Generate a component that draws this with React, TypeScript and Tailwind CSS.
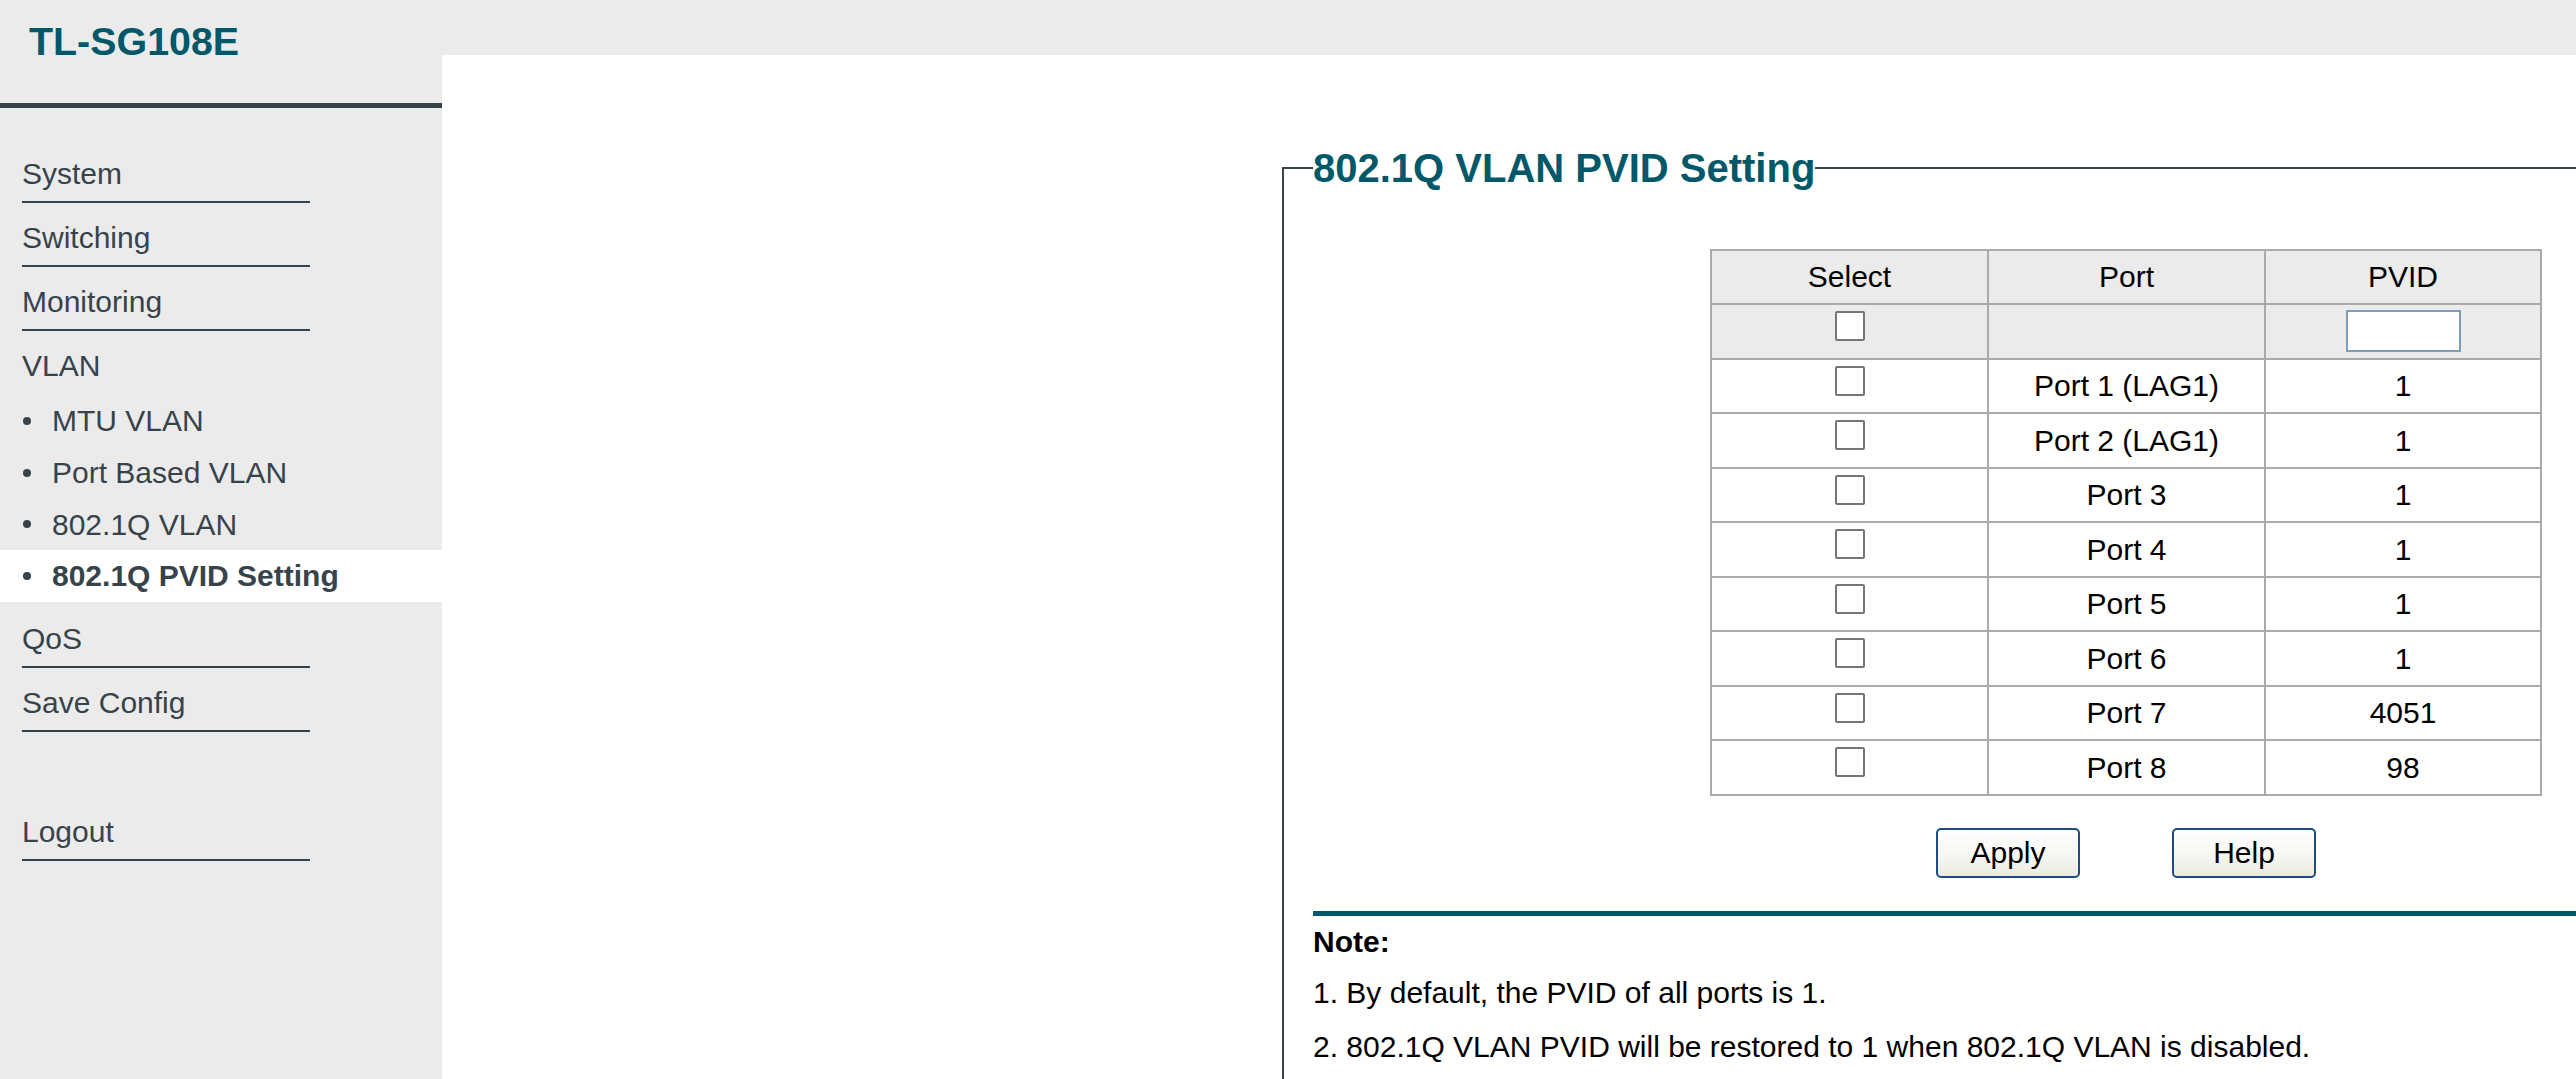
import React from 'react';

// ─── Data ────────────────────────────────────────────────────────────────────
const PORTS: [string, string][] = [
  ['Port 1 (LAG1)', '1'],
  ['Port 2 (LAG1)', '1'],
  ['Port 3', '1'],
  ['Port 4', '1'],
  ['Port 5', '1'],
  ['Port 6', '1'],
  ['Port 7', '4051'],
  ['Port 8', '98'],
];

const VLAN_SUB = ['MTU VLAN', 'Port Based VLAN', '802.1Q VLAN', '802.1Q PVID Setting'];
const ACTIVE = '802.1Q PVID Setting';

// ─── Sidebar ─────────────────────────────────────────────────────────────────
function MenuItem({ label, underline = true }: { label: string; underline?: boolean }) {
  return (
    <div className="h-[64px] pl-[22px]">
      <div
        className={[
          'w-[288px] h-[47px] leading-[35px] text-[30px]',
          underline ? 'border-b-2 border-[#37434b]' : '',
        ].join(' ')}
      >
        {label}
      </div>
    </div>
  );
}

function SubItem({ label }: { label: string }) {
  const active = label === ACTIVE;
  return (
    <div
      className={[
        'h-[51.7px] flex items-center pl-[23px] text-[30px] leading-[35px]',
        active ? 'bg-white font-bold' : '',
      ].join(' ')}
    >
      <span className="w-[8px] h-[8px] rounded-full bg-[#37434b] shrink-0" />
      <span className="ml-[21px]">{label}</span>
    </div>
  );
}

function Sidebar() {
  return (
    <aside className="w-[442px] shrink-0 h-full bg-[#ebebeb] text-[#37434b]">
      <div className="h-[103px] pl-[29px] pt-[19px]">
        <h1 className="text-[39.4px] leading-[45px] font-bold text-[#015869]">TL-SG108E</h1>
      </div>
      <div className="h-[5px] bg-[#37434b]" />

      <nav className="mt-[48px]">
        <MenuItem label="System" />
        <MenuItem label="Switching" />
        <MenuItem label="Monitoring" />
        <div className="h-[47px] pl-[22px] text-[30px] leading-[35px]">VLAN</div>
        {VLAN_SUB.map((s) => (
          <SubItem key={s} label={s} />
        ))}
        <div className="mt-[19px]">
          <MenuItem label="QoS" />
          <MenuItem label="Save Config" />
        </div>
        <div className="mt-[65px]">
          <MenuItem label="Logout" />
        </div>
      </nav>
    </aside>
  );
}

// ─── Table bits ──────────────────────────────────────────────────────────────
function Box() {
  return (
    <input
      type="checkbox"
      className="appearance-none w-[30px] h-[30px] border-2 border-[#767676] rounded-[2px] bg-white -translate-y-[5px]"
    />
  );
}

function Cell({ children, head = false }: { children?: React.ReactNode; head?: boolean }) {
  return (
    <div
      className={[
        'h-[52.5px] flex items-center justify-center text-[30px] text-black',
        head ? 'bg-[#ebebeb]' : 'bg-white',
      ].join(' ')}
    >
      {children}
    </div>
  );
}

function Button({ label }: { label: string }) {
  return (
    <button className="w-[144px] h-[50px] rounded-[5px] border-2 border-[#1c4f80] bg-linear-to-b from-white via-[#f7f7f4] to-[#ecebe2] text-[30px] text-black">
      {label}
    </button>
  );
}

// ─── Page ────────────────────────────────────────────────────────────────────
export default function App() {
  return (
    <div className="flex w-full h-[1079px] overflow-hidden font-['Liberation_Sans',Arial,sans-serif]">
      <Sidebar />

      <main className="flex-1 min-w-0 flex flex-col overflow-hidden">
        <div className="h-[55px] shrink-0 bg-[#ebebeb]" />

        <div className="flex-1 bg-white pl-[840px] pt-[90px]">
          <fieldset className="w-[1688px] border-2 border-[#37434b] px-[29px] pt-0 pb-[60px]">
            <legend className="text-[40px] leading-[46px] font-bold text-[#015869] p-0">
              802.1Q VLAN PVID Setting
            </legend>

            <div className="mt-[57.5px] mx-auto w-[832px] bg-[#aaaaaa] p-[2px] grid grid-cols-[275px_275px_274px] gap-[2px]">
              <Cell head>Select</Cell>
              <Cell head>Port</Cell>
              <Cell head>PVID</Cell>

              <Cell head>
                <Box />
              </Cell>
              <Cell head />
              <Cell head>
                <input
                  type="text"
                  className="w-[115px] h-[42px] border-2 border-[#7f9db9] bg-white outline-none"
                />
              </Cell>

              {PORTS.map(([port, pvid]) => (
                <React.Fragment key={port}>
                  <Cell>
                    <Box />
                  </Cell>
                  <Cell>{port}</Cell>
                  <Cell>{pvid}</Cell>
                </React.Fragment>
              ))}
            </div>

            <div className="mt-[32px] flex justify-center gap-[92px]">
              <Button label="Apply" />
              <Button label="Help" />
            </div>

            <div className="mt-[33px] h-[5px] bg-[#015869]" />

            <div className="text-[30px] leading-[34.5px] text-black">
              <p className="mt-[9px] font-bold">Note:</p>
              <p className="mt-[17px]">1. By default, the PVID of all ports is 1.</p>
              <p className="mt-[19px]">2. 802.1Q VLAN PVID will be restored to 1 when 802.1Q VLAN is disabled.</p>
            </div>
          </fieldset>
        </div>
      </main>
    </div>
  );
}
